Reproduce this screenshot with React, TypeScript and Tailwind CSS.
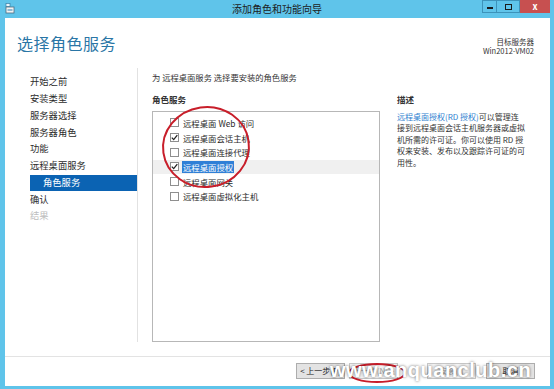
import React from 'react';

const font = { fontFamily: '"Noto Sans CJK SC", "Liberation Sans", sans-serif' };

const navItems = [
  { label: '开始之前', state: 'normal' },
  { label: '安装类型', state: 'normal' },
  { label: '服务器选择', state: 'normal' },
  { label: '服务器角色', state: 'normal' },
  { label: '功能', state: 'normal' },
  { label: '远程桌面服务', state: 'normal' },
  { label: '角色服务', state: 'active' },
  { label: '确认', state: 'normal' },
  { label: '结果', state: 'disabled' },
];

const services = [
  { label: '远程桌面 Web 访问', checked: false },
  { label: '远程桌面会话主机', checked: true },
  { label: '远程桌面连接代理', checked: false },
  { label: '远程桌面授权', checked: true, selected: true },
  { label: '远程桌面网关', checked: false },
  { label: '远程桌面虚拟化主机', checked: false },
];

const descLines = [
  '接到远程桌面会话主机服务器或虚拟',
  '机所需的许可证。你可以使用 RD 授',
  '权来安装、发布以及跟踪许可证的可',
  '用性。',
];

function Checkbox({ checked }: { checked: boolean }) {
  return (
    <div className="w-[9px] h-[9px] border border-[#8f8f8f] bg-white flex items-center justify-center shrink-0">
      {checked && (
        <svg width="7" height="7" viewBox="0 0 7 7">
          <path d="M0.8 3.6 L2.7 5.6 L6.3 1.2" fill="none" stroke="#222" strokeWidth="1.3" />
        </svg>
      )}
    </div>
  );
}

function FooterButton({ label, muted }: { label: string; muted?: boolean }) {
  return (
    <div
      className={`w-[49px] h-[16px] border flex items-center justify-center text-[8px] ${
        muted ? 'border-[#c8c8c8] bg-[#f4f4f4] text-[#9a9a9a]' : 'border-[#adadad] bg-[#e3e3e3] text-[#222]'
      }`}
    >
      {label}
    </div>
  );
}

export default function App() {
  return (
    <div className="relative w-[554px] h-[389px] bg-[#5fc4ea] flex flex-col overflow-hidden" style={font}>
      {/* 标题栏 */}
      <div className="relative h-[18px] flex items-center">
        <svg className="absolute left-[5px] top-[3px]" width="10" height="11" viewBox="0 0 10 11">
          <rect x="1" y="0.5" width="4" height="3" fill="#eaf6fc" stroke="#3a7fa6" strokeWidth="0.7" />
          <rect x="1" y="4" width="8" height="6" fill="#f3f3f3" stroke="#4c6d82" strokeWidth="0.8" />
          <rect x="2.5" y="6" width="5" height="2" fill="#8fb9d2" />
        </svg>
        <div className="flex-1 text-center text-[10px] text-[#1c1c1c] leading-none">添加角色和功能向导</div>
        <div className="absolute right-[4px] top-0 flex h-[13px]">
          <div className="w-[15px] h-full border border-[#3d93ba] flex items-end justify-center pb-[3px]">
            <div className="w-[6px] h-[2px] bg-[#1b1b1b]" />
          </div>
          <div className="w-[23px] h-full border-y border-r border-[#3d93ba] flex items-center justify-center">
            <div className="w-[7px] h-[6px] border-[1.5px] border-[#1b1b1b]" />
          </div>
          <div className="w-[30px] h-full bg-[#c75050] flex items-center justify-center text-white text-[9px] font-bold leading-none">
            x
          </div>
        </div>
      </div>

      {/* 客户区 */}
      <div className="flex-1 ml-[5px] mr-[4px] mb-[3px] bg-white flex flex-col">
        <div className="h-[50px] flex justify-between">
          <div className="pl-[12px] pt-[14px] text-[16px] leading-[22px] text-[#2a76a6] tracking-[0.5px]">选择角色服务</div>
          <div className="pr-[16px] pt-[19px] text-right text-[7.5px] leading-[9px] text-[#333]">
            <div>目标服务器</div>
            <div>Win2012-VM02</div>
          </div>
        </div>

        <div className="flex-1 flex pb-[14px]">
          {/* 左侧导航 */}
          <div className="w-[133px] border-r border-[#e2e2e2] pt-[6px] text-[9.3px]">
            {navItems.map((item) => (
              <div
                key={item.label}
                className={`ml-[25px] h-[16.75px] flex items-center ${
                  item.state === 'active'
                    ? 'bg-[#0b63b3] text-white pl-[13px]'
                    : item.state === 'disabled'
                    ? 'text-[#bdbdbd]'
                    : 'text-[#2b2b2b]'
                }`}
              >
                {item.label}
              </div>
            ))}
          </div>

          {/* 内容 */}
          <div className="flex-1 pl-[14px] flex flex-col">
            <div className="pt-[3px] h-[15px] text-[8.3px] leading-[12px] text-[#333]">为 远程桌面服务 选择要安装的角色服务</div>
            <div className="flex-1 flex mt-[10px]">
              <div className="w-[228px] flex flex-col">
                <div className="h-[12px] text-[8.5px] leading-[12px] font-bold text-[#333]">角色服务</div>
                <div className="flex-1 mt-[6px] border border-[#b7b7b7] pt-[3.5px]">
                  {services.map((s) => (
                    <div
                      key={s.label}
                      className={`h-[14.7px] flex items-center pl-[17px] gap-[4px] text-[8.4px] ${
                        s.selected ? 'bg-[#f0f0f0]' : ''
                      }`}
                    >
                      <Checkbox checked={s.checked} />
                      <span
                        className={`leading-[12px] ${
                          s.selected ? 'bg-[#2f7fd6] text-white px-[1px] -ml-[1px]' : 'text-[#2b2b2b]'
                        }`}
                      >
                        {s.label}
                      </span>
                    </div>
                  ))}
                </div>
              </div>
              <div className="ml-[17px] w-[136px]">
                <div className="h-[12px] text-[8.5px] leading-[12px] font-bold text-[#333]">描述</div>
                <div className="mt-[6px] text-[8px] leading-[11.4px] text-[#333] whitespace-nowrap">
                  <div>
                    <span className="text-[#2f7fd0]">远程桌面授权(RD 授权)</span>可以管理连
                  </div>
                  {descLines.map((line) => (
                    <div key={line}>{line}</div>
                  ))}
                </div>
              </div>
            </div>
          </div>
        </div>

        {/* 底部按钮 */}
        <div className="h-[30px] border-t border-[#e3e3e3] flex items-start pt-[6px] pl-[291px]">
          <FooterButton label="< 上一步(P)" />
          <div className="ml-[4px]">
            <FooterButton label="下一步(N) >" muted />
          </div>
          <div className="ml-[29px]">
            <FooterButton label="安装(I)" muted />
          </div>
          <div className="ml-[10px]">
            <FooterButton label="取消" />
          </div>
        </div>
      </div>

      {/* 标注和水印 */}
      <svg className="absolute left-0 top-0 pointer-events-none" width="554" height="389" viewBox="0 0 554 389">
        <ellipse cx="206" cy="147" rx="43" ry="40" fill="none" stroke="#c81e2a" strokeWidth="2" transform="rotate(-8 206 147)" />
        <ellipse cx="377" cy="373" rx="28" ry="9" fill="none" stroke="#c81e2a" strokeWidth="2" />
      </svg>
      <div className="absolute left-[330px] top-[359px] text-[20px] leading-[22px] font-bold text-white tracking-[0.5px] [text-shadow:0_0_3px_rgba(0,0,0,0.6)] pointer-events-none" style={{ fontFamily: '"Liberation Sans", sans-serif' }}>
        www.anquanclub.cn
      </div>
    </div>
  );
}
